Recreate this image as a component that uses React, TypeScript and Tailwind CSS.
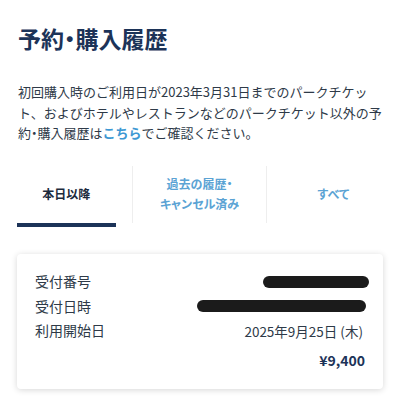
import React from "react";

const font = { fontFamily: '"Noto Sans CJK JP", "Noto Sans", sans-serif' };

export default function App() {
  return (
    <div className="w-[400px] h-[400px] bg-white overflow-hidden" style={font}>
      <div className="px-[18px] pt-[22px]">
        <h1 className="text-[23px] leading-[32px] font-bold text-[#1c3358] [font-feature-settings:'palt']">予約・購入履歴</h1>
        <p className="mt-[28px] text-[13px] leading-[20.5px] text-[#2e3a48]">
          初回購入時のご利用日が2023年3月31日までのパークチケット、およびホテルやレストランなどのパークチケット以外の予約
          <span className="[font-feature-settings:'palt']">・</span>
          購入履歴は
          <span className="text-[#3d98d3] font-bold">こちら</span>
          でご確認ください。
        </p>
      </div>
      <div className="mt-[22px] grid grid-cols-3">
        <div className="flex flex-col">
          <div className="h-[57px] flex items-center justify-center border-r border-[#eeeeee] text-[12px] font-bold text-[#1c2a3c]">
            本日以降
          </div>
          <div className="h-[4px] mx-[17px] bg-[#1c3358]" />
        </div>
        <div className="flex flex-col">
          <div className="h-[57px] flex flex-col items-center justify-center border-r border-[#eeeeee] text-[12px] leading-[20px] font-bold text-[#5ba3d4] text-center [font-feature-settings:'palt']">
            <span>過去の履歴・</span>
            <span>キャンセル済み</span>
          </div>
        </div>
        <div className="flex flex-col">
          <div className="h-[57px] flex items-center justify-center text-[12px] font-bold text-[#5ba3d4] [font-feature-settings:'palt']">
            すべて
          </div>
        </div>
      </div>
      <div className="mx-[17px] mt-[27px] rounded-[4px] bg-white shadow-[0_1px_6px_rgba(0,0,0,0.16)] pl-[18px] pr-[18px] pt-[16px] pb-[19px] text-[14px] text-[#2e3a48]">
        <div className="flex items-center justify-between h-[24.5px]">
          <span>受付番号</span>
          <span className="w-[106px] h-[12px] rounded-full bg-[#1b1b1b] mr-[-4px]" />
        </div>
        <div className="flex items-center justify-between h-[24.5px]">
          <span>受付日時</span>
          <span className="w-[169px] h-[12px] rounded-full bg-[#1b1b1b] mr-[-1px]" />
        </div>
        <div className="flex items-center justify-between h-[24.5px]">
          <span>利用開始日</span>
          <span className="text-[13.5px] mr-[2px]">2025年9月25日 (木)</span>
        </div>
        <div className="flex justify-end mt-[7px] text-[14px] leading-[20px] font-bold text-[#1c3358]">
          ¥9,400
        </div>
      </div>
    </div>
  );
}
